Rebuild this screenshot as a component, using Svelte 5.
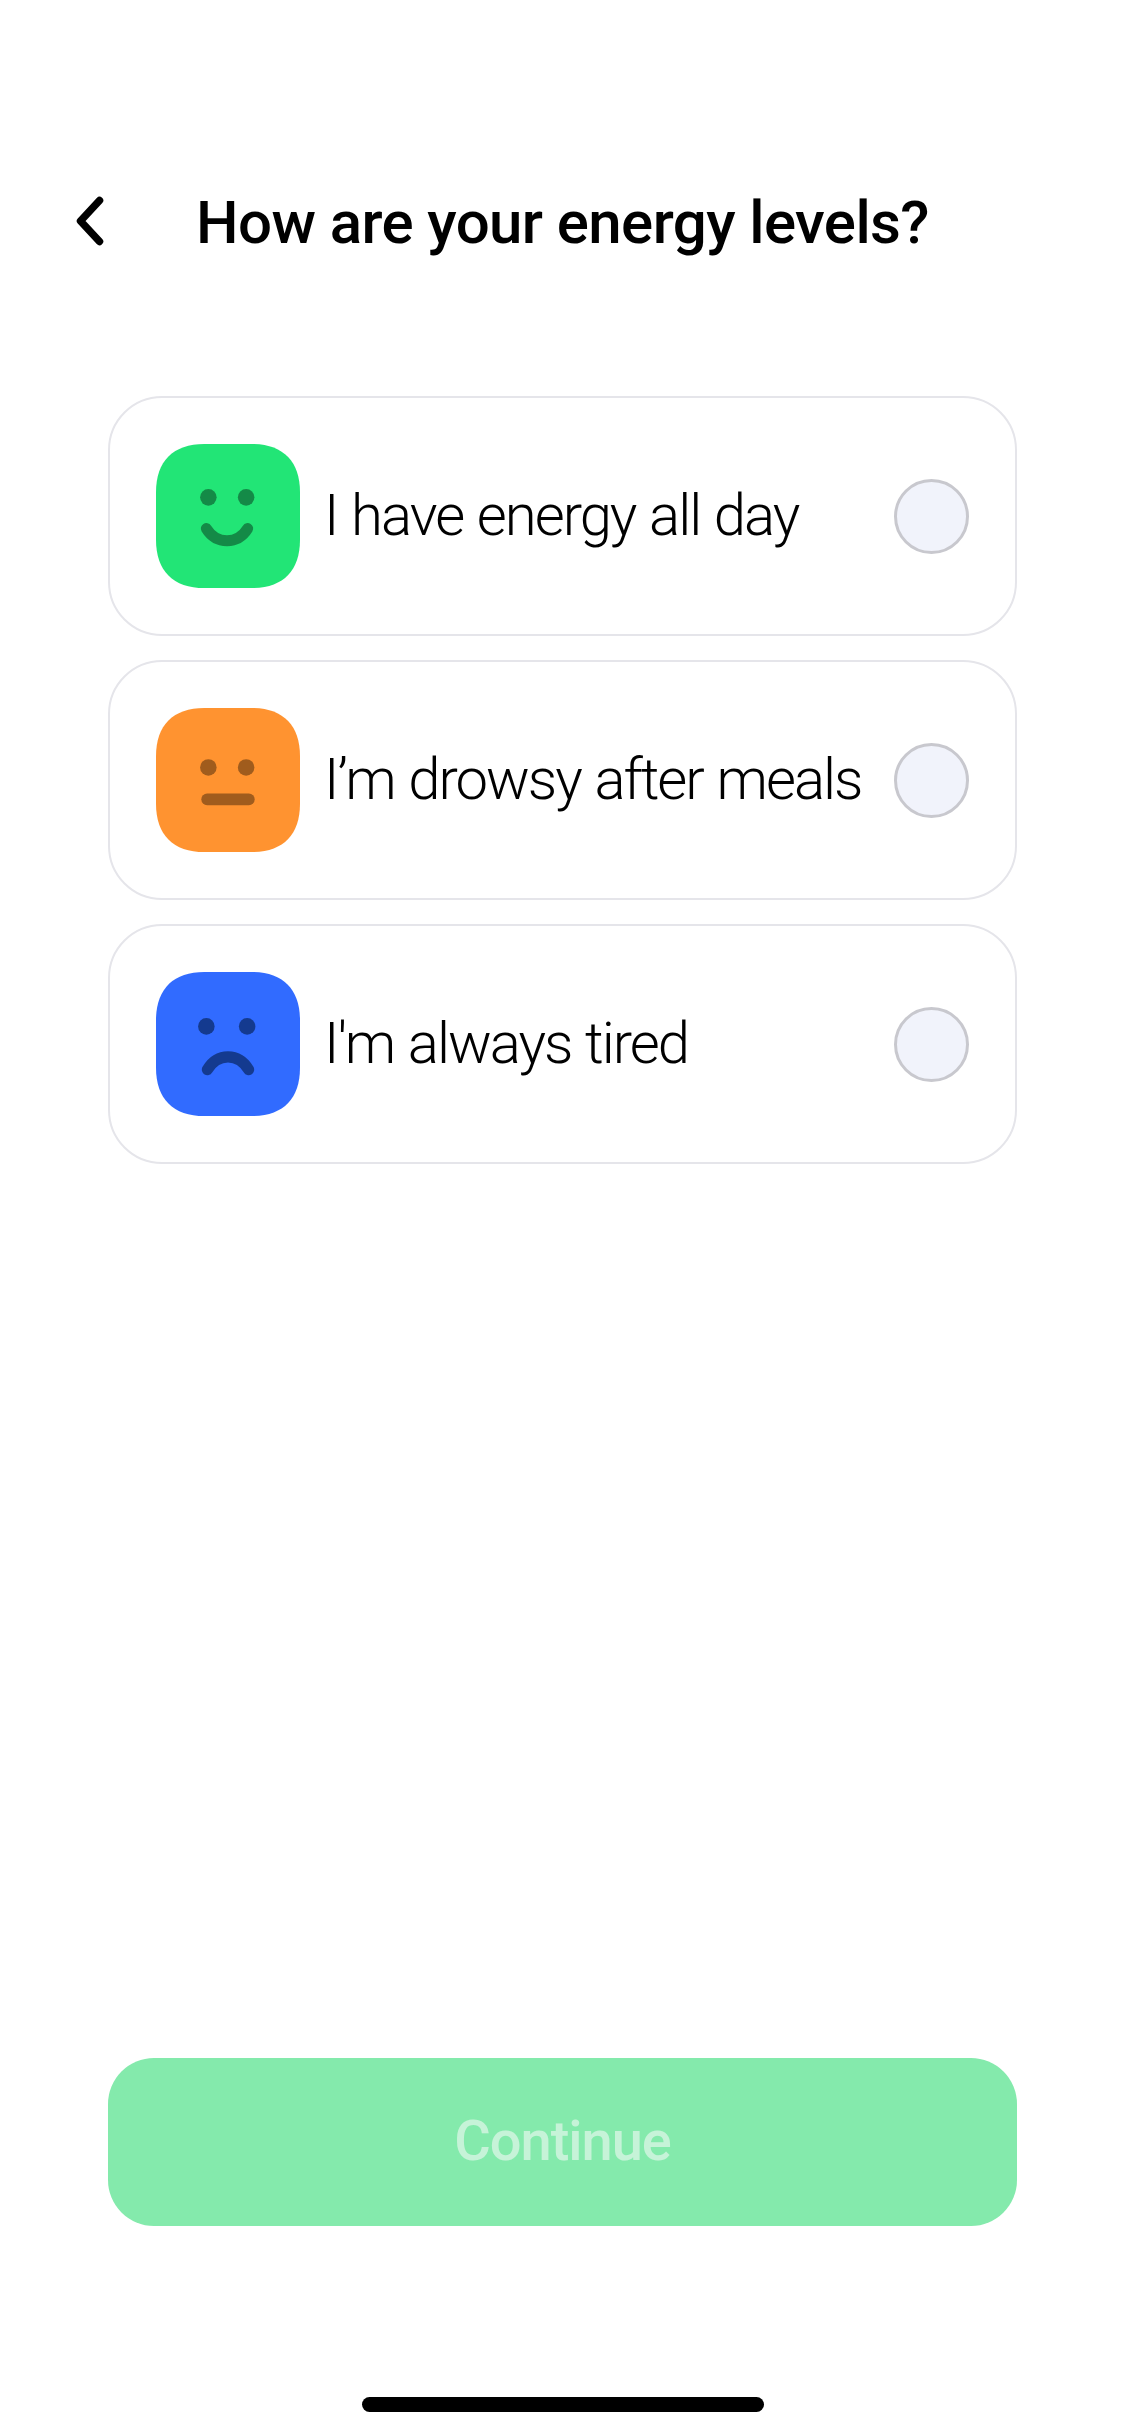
<script lang="ts">
  const squircle =
    'M48 0H95C126 0 143 17 143 48V95C143 126 126 143 95 143H48C17 143 0 126 0 95V48C0 17 17 0 48 0Z';

  const options = [
    { label: 'I have energy all day', mood: 'happy', bg: '#22e576', ink: '#148a47' },
    { label: 'I’m drowsy after meals', mood: 'neutral', bg: '#ff9330', ink: '#a05c1d' },
    { label: "I'm always tired", mood: 'sad', bg: '#316bff', ink: '#143a8f' },
  ];
</script>

<div class="page">
  <header class="header">
    <button class="back" aria-label="Back">
      <svg width="28" height="50" viewBox="0 0 28 50" fill="none">
        <path d="M23.5 4.5L4.5 25L23.5 45.5" stroke="#000" stroke-width="7.5" stroke-linecap="round" stroke-linejoin="round" />
      </svg>
    </button>
    <h1>How are your energy levels?</h1>
  </header>

  <div class="options">
    {#each options as opt}
      <div class="card">
        <svg class="face" width="144" height="144" viewBox="0 0 143 143">
          <path d={squircle} fill={opt.bg} />
          {#if opt.mood === 'happy'}
            <circle cx="52" cy="53" r="8.2" fill={opt.ink} />
            <circle cx="89.5" cy="53" r="8.2" fill={opt.ink} />
            <path d="M50 84C60 100 81 100 91 84" fill="none" stroke={opt.ink} stroke-width="11" stroke-linecap="round" />
          {:else if opt.mood === 'neutral'}
            <circle cx="52" cy="59" r="8.2" fill={opt.ink} />
            <circle cx="89.5" cy="59" r="8.2" fill={opt.ink} />
            <rect x="45" y="85" width="53" height="11.5" rx="5.75" fill={opt.ink} />
          {:else}
            <circle cx="50" cy="54" r="8.2" fill={opt.ink} />
            <circle cx="90.5" cy="54" r="8.2" fill={opt.ink} />
            <path d="M51 97C61 80 82 80 92 97" fill="none" stroke={opt.ink} stroke-width="11" stroke-linecap="round" />
          {/if}
        </svg>
        <span class="label">{opt.label}</span>
        <span class="radio"></span>
      </div>
    {/each}
  </div>

  <button class="continue">Continue</button>
  <div class="home-bar"></div>
</div>

<style>
  :global(body) {
    margin: 0;
    background: #fff;
  }
  .page {
    height: 2436px;
    box-sizing: border-box;
    display: flex;
    flex-direction: column;
    padding: 180px 108px 24px;
    font-family: Roboto, Lato, sans-serif;
    color: #000;
  }
  .header {
    display: flex;
    align-items: center;
    gap: 92px;
    margin-left: -32px;
    height: 82px;
  }
  .back {
    display: flex;
    padding: 0;
    border: none;
    background: none;
  }
  h1 {
    margin: 0;
    padding-top: 3px;
    font-size: 60px;
    font-weight: 500;
    letter-spacing: -0.6px;
    white-space: nowrap;
  }
  .options {
    display: flex;
    flex-direction: column;
    gap: 24px;
    margin-top: 134px;
  }
  .card {
    height: 240px;
    box-sizing: border-box;
    display: flex;
    align-items: center;
    gap: 24px;
    padding: 0 46px;
    border: 2.5px solid #e5e5ea;
    border-radius: 54px;
  }
  .face {
    flex: none;
  }
  .label {
    flex: 1;
    min-width: 0;
    padding-bottom: 3px;
    font-size: 58px;
    font-weight: 300;
    letter-spacing: -2px;
    word-spacing: 1.5px;
    white-space: nowrap;
  }
  .radio {
    flex: none;
    width: 75px;
    height: 75px;
    box-sizing: border-box;
    border: 3px solid #c8c8ce;
    border-radius: 50%;
    background: #f1f3fb;
  }
  .continue {
    margin-top: auto;
    height: 168px;
    padding-bottom: 4px;
    border: none;
    border-radius: 46px;
    background: #84eaac;
    color: #c6f3d8;
    font-family: inherit;
    font-size: 56px;
    font-weight: 500;
    letter-spacing: -1px;
  }
  .home-bar {
    align-self: center;
    width: 402px;
    height: 15px;
    margin-top: 171px;
    border-radius: 8px;
    background: #000;
  }
</style>
